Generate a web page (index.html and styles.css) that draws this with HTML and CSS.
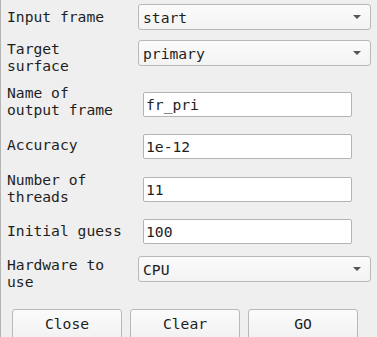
FILE: index.html
```html
<!DOCTYPE html>
<html lang="en">

<head>
    <meta charset="UTF-8">
    <meta name="viewport" content="width=device-width, initial-scale=1.0">
    <title>Frame transform</title>
    <link rel="stylesheet" href="styles.css">
</head>

<body>
    <div class="panel">
        <div class="row row-1">
            <label class="field-label">Input frame</label>
            <div class="combo"><span>start</span><span class="arrow"></span></div>
        </div>

        <div class="row row-2">
            <label class="field-label">Target<br>surface</label>
            <div class="combo"><span>primary</span><span class="arrow"></span></div>
        </div>

        <div class="row row-3">
            <label class="field-label">Name of<br>output frame</label>
            <div class="entry" contenteditable="true">fr_pri</div>
        </div>

        <div class="row row-4">
            <label class="field-label">Accuracy</label>
            <div class="entry" contenteditable="true">1e-12</div>
        </div>

        <div class="row row-5">
            <label class="field-label">Number of<br>threads</label>
            <div class="entry" contenteditable="true">11</div>
        </div>

        <div class="row row-6">
            <label class="field-label">Initial guess</label>
            <div class="entry" contenteditable="true">100</div>
        </div>

        <div class="row row-7">
            <label class="field-label">Hardware to<br>use</label>
            <div class="combo"><span>CPU</span><span class="arrow"></span></div>
        </div>

        <!-- Action buttons -->
        <div class="button-group">
            <button class="btn">Close</button>
            <button class="btn">Clear</button>
            <button class="btn">GO</button>
        </div>
    </div>
</body>

</html>
```

FILE: styles.css
```css
* {
    margin: 0;
    padding: 0;
    box-sizing: border-box;
    font-family: 'DejaVu Sans Mono', monospace;
}

body {
    background-color: #efefef;
    color: #1e1e1e;
    font-size: 14.67px;
    height: 100vh;
    overflow: hidden;
    border-left: 1px solid #b4b4b4;
}

.panel {
    padding-left: 6px;
}

.row {
    display: flex;
    align-items: flex-start;
}

/* rows follow the spacing of the original form layout */
.row-1 {
    margin-top: 4px;
}

.row-1 .field-label {
    margin-top: 4px;
}

.row-2 {
    margin-top: 10px;
}

.row-3 {
    margin-top: 10px;
}

.row-3 .entry {
    margin-top: 8px;
}

.row-4 {
    margin-top: 16px;
}

.row-4 .field-label {
    margin-top: 2px;
}

.row-5 {
    margin-top: 12px;
}

.row-5 .entry {
    margin-top: 6px;
}

.row-6 {
    margin-top: 14px;
}

.row-6 .field-label {
    margin-top: 3px;
}

.row-7 {
    margin-top: 12px;
}

.field-label {
    width: 131px;
    line-height: 17px;
    flex-shrink: 0;
}

.combo {
    width: 233px;
    height: 26px;
    border: 1px solid #b9b9b9;
    border-radius: 3px;
    background: linear-gradient(#fbfbfb, #f3f3f3);
    display: flex;
    align-items: center;
    justify-content: space-between;
    padding: 0 9px 0 4px;
}

.arrow {
    width: 0;
    height: 0;
    border-left: 4px solid transparent;
    border-right: 4px solid transparent;
    border-top: 4px solid #555;
}

.entry {
    margin-left: 5px;
    width: 209px;
    height: 25px;
    border: 1px solid #b4b4b4;
    border-radius: 2px;
    background-color: white;
    line-height: 23px;
    padding: 0 2px;
    outline: none;
    white-space: nowrap;
    overflow: hidden;
}

.button-group {
    display: flex;
    gap: 8px;
    margin-top: 19px;
    padding-left: 5px;
}

.btn {
    width: 110px;
    height: 32px;
    border: 1px solid #b9b9b9;
    border-radius: 3px;
    background: linear-gradient(#fbfbfb, #f1f1f1);
    font-size: 14.67px;
    color: #1e1e1e;
    padding-bottom: 4px;
}
```
